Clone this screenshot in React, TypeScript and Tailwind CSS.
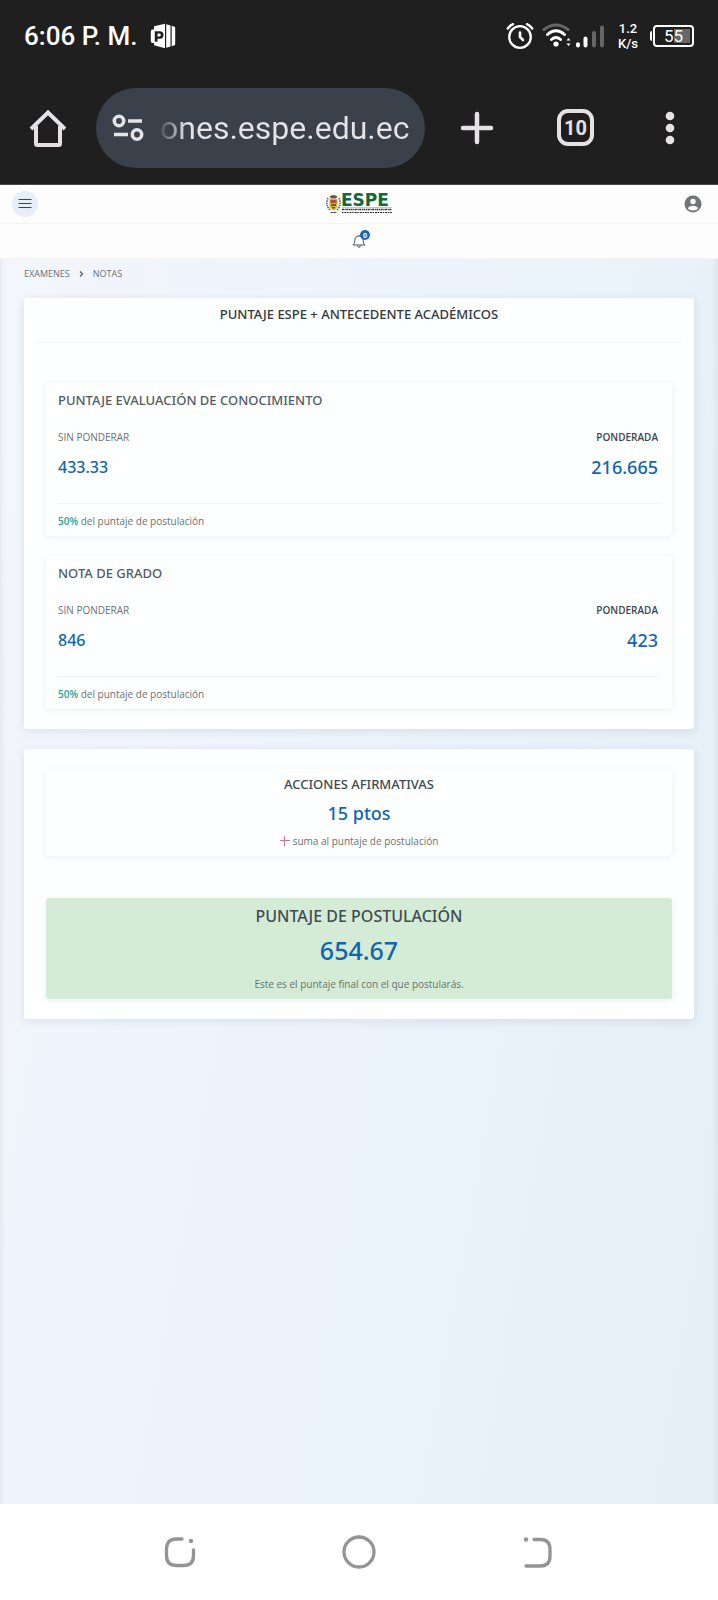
import React from "react";

function StatusBar() {
  return (
    <div className="flex h-[72px] items-center justify-between pl-6 pr-6 text-white">
      <div className="flex items-center gap-[13px]">
        <span className="text-[26px] leading-8 font-medium">6:06 P. M.</span>
        <svg width="26" height="26" viewBox="0 0 26 26" aria-hidden="true">
          <path fillRule="evenodd" fill="#fff" d="M4 3.200 15 .8v24.400L4 22.300V20H2.500Q.8 20 .8 18V8.500Q.8 6.500 2.500 6.500H4ZM4.800 8.200v10.600h2.700v-3h2.300q3.700-.3 3.700-3.900T9.800 8.200Zm2.700 2.300h1.800q1.600.1 1.600 1.500t-1.600 1.500H7.500Z" />
          <path fill="#fff" d="M16.200 1.200 20.500 2.500v21L16.200 24.800ZM21.700 2.800l2.200.6q1.300.4 1.300 1.700v15.800q0 1.300-1.300 1.700l-2.200.6Z" />
        </svg>
      </div>
      <div className="flex items-center">
        <svg width="28" height="28" viewBox="0 0 28 28" fill="none" stroke="#fff" strokeLinecap="round" aria-hidden="true">
          <circle cx="14" cy="15" r="10.800" strokeWidth="2.300" />
          <path d="M14 10.500v4.500l3 3" strokeWidth="2.600" />
          <path d="M1.800 6.500Q4 3.500 7 2.200M26.200 6.500Q24 3.500 21 2.200" strokeWidth="2.500" />
        </svg>
        <svg className="ml-2" width="64" height="28" viewBox="0 0 64 28" fill="none" strokeLinecap="round" aria-hidden="true">
          <path d="M2 7.500Q14-1.500 26 7.500" stroke="#666" strokeWidth="3" />
          <path d="M5.500 12.500q8.500-7.500 17 0M9.500 17.500q4.500-4 9 0" stroke="#fff" strokeWidth="3" />
          <circle cx="14" cy="22" r="2.600" fill="#fff" />
          <path d="m24.500 18.500 2-2.500 2 2.500ZM24.500 21.500l2 2.500 2-2.500Z" fill="#fff" />
          <path d="M36 22.200v1.300M43.500 16.500v7" stroke="#fff" strokeWidth="4" />
          <path d="M52 11v12.500M60 5.500v18" stroke="#666" strokeWidth="4" />
        </svg>
        <div className="ml-[10px] w-6 text-center text-[13px] leading-[15px] font-medium">
          1.2
          <br />
          K/s
        </div>
        <div className="ml-2 flex items-center pl-[2px]">
          <span className="mr-px h-[10px] w-[2px] rounded-l bg-white" />
          <span className="flex h-[22px] w-[41px] items-center justify-center rounded-[4px] border-2 border-white bg-linear-to-r from-transparent from-50% to-[#666] to-50% bg-clip-content p-[2px] text-[17px] leading-none">
            55
          </span>
        </div>
      </div>
    </div>
  );
}

function BrowserBar() {
  return (
    <div className="flex h-[113px] items-center border-b border-[#4a4a4a] pb-px">
      <button aria-label="Inicio" className="flex w-24 shrink-0 justify-center">
        <svg width="40" height="40" viewBox="0 0 40 40" fill="none" stroke="#e6e1e5" strokeWidth="4" strokeLinejoin="round">
          <path d="M3 21 20 4.500 37 21" strokeLinejoin="miter" />
          <path d="M8 18v17.500q0 1.500 1.500 1.500h21q1.500 0 1.500-1.500V18" />
        </svg>
      </button>
      <div className="flex h-20 min-w-0 flex-1 items-center rounded-full bg-[#3b414b] pr-3 pl-4">
        <button aria-label="Información del sitio" className="shrink-0">
          <svg width="32" height="30" viewBox="0 0 32 30" fill="none" stroke="#e3e3e8" strokeWidth="3.600">
            <circle cx="7" cy="8" r="4.700" />
            <path d="M16 8h14M2 21.500h14" />
            <circle cx="25" cy="21.500" r="4.700" />
          </svg>
        </button>
        <button className="ml-4 flex-1 bg-linear-to-r from-[#4b515b] to-[#e3e3e8] to-10% bg-clip-text text-left text-[32px] leading-10 whitespace-nowrap text-transparent">
          ones.espe.edu.ec
        </button>
      </div>
      <button aria-label="Nueva pestaña" className="flex w-[104px] shrink-0 justify-center">
        <svg width="34" height="34" viewBox="0 0 34 34" stroke="#e6e1e5" strokeWidth="4.500" strokeLinecap="round">
          <path d="M3 17h28M17 3v28" />
        </svg>
      </button>
      <button className="mx-7 flex size-[37px] shrink-0 items-center justify-center rounded-[11px] border-4 border-[#e6e1e5] text-[20px] leading-none font-bold text-[#e6e1e5]">
        10
      </button>
      <button aria-label="Menú" className="mr-4 ml-4 flex w-16 shrink-0 justify-center">
        <svg width="10" height="34" viewBox="0 0 10 34" fill="#e6e1e5">
          <circle cx="5" cy="5" r="4.300" />
          <circle cx="5" cy="17" r="4.300" />
          <circle cx="5" cy="29" r="4.300" />
        </svg>
      </button>
    </div>
  );
}

function Logo() {
  return (
    <svg className="overflow-visible" width="68" height="20" viewBox="0 0 68 20" role="img" aria-label="ESPE">
      <path d="M3 4Q0 11 5 16M14 4q3 7-2 12" fill="none" stroke="#5c6b3a" strokeWidth="1.600" strokeDasharray="1.500 .8" />
      <path d="M4.500 2.500Q8.500-.5 12.500 2.500l-1.500 2h-5Z" fill="#6b5637" />
      <path d="M4.500 5h8v6q0 4-4 5.500-4-1.500-4-5.500Z" fill="#d9b23a" />
      <path d="M5.500 6h6v3h-6Z" fill="#c7472f" />
      <path d="M6 10h5v2H6Z" fill="#397c50" />
      <path d="M6.500 13h4l-2 2Z" fill="#a83832" />
      <path d="M5.500 18.500h6" stroke="#555" strokeWidth="1" />
      <text x="16" y="12" fontFamily="DejaVu Sans" fontWeight="bold" fontSize="17" fill="#12683a">ESPE</text>
      <path d="M17 13.500h50" stroke="#d89a9a" strokeWidth=".7" />
      <path d="M17 15.500h50" stroke="#333" strokeWidth="1.300" strokeDasharray="2 .6 1.200 .5" />
      <path d="M17 18.500h50" stroke="#222" strokeWidth="1.100" strokeDasharray="1.500 .9 2 .7" />
    </svg>
  );
}

function SiteHeader() {
  return (
    <header className="bg-[#fdfdfe]">
      <div className="flex h-[39px] items-center justify-between border-b border-[#f1f3f6] px-3">
        <button aria-label="Abrir menú" className="flex size-[26px] items-center justify-center rounded-full bg-[#e6eef7]">
          <svg width="14" height="12" viewBox="0 0 14 12" stroke="#3c4650" strokeWidth="1">
            <path d="M.5 1.500h13M.5 5.500h13M.5 9.500h13" />
          </svg>
        </button>
        <Logo />
        <button aria-label="Cuenta" className="flex w-[26px] justify-center">
          <svg width="18" height="18" viewBox="0 0 18 18">
            <circle cx="9" cy="9" r="8.500" fill="#737477" />
            <circle cx="9" cy="6.500" r="2.700" fill="#fff" />
            <path d="M3.800 13.500Q5 10.700 9 10.700t5.200 2.800Q12.500 15.500 9 15.500t-5.200-2Z" fill="#fff" />
          </svg>
        </button>
      </div>
      <div className="flex h-[35px] items-center justify-center border-b border-[#f1f3f6]">
        <button aria-label="Notificaciones" className="relative">
          <svg width="14" height="14" viewBox="0 0 14 14" fill="none" stroke="#49525b" strokeWidth="1">
            <path d="M1 11q1.800-1 1.800-4.500Q2.800 2 7 2t4.200 4.500Q11.200 10 13 11ZM5.500 11.500q.3 1.800 1.500 1.800t1.500-1.800M7 1v1" />
          </svg>
          <span className="absolute -top-1 left-2 flex size-[10px] items-center justify-center rounded-full bg-[#1368b8] text-[7px] leading-none font-bold text-white">
            0
          </span>
        </button>
      </div>
    </header>
  );
}

type ScoreProps = { title: string; raw: string; weighted: string };

function ScoreCard({ title, raw, weighted }: ScoreProps) {
  return (
    <section className="rounded-[3px] bg-[#fdfefe] px-3 pt-2 pb-[7px] shadow-[0_1px_6px_rgba(60,80,110,0.09)]">
      <h2 className="font-['Noto_Sans',sans-serif] text-[13px] leading-[18px] font-medium text-[#535b65]">{title}</h2>
      <div className="mt-5 flex justify-between pr-[2px] text-[10px] leading-4">
        <span className="text-[#6b7178]">SIN PONDERAR</span>
        <span className="font-semibold text-[#3e4650]">PONDERADA</span>
      </div>
      <div className="mt-[10px] flex items-center justify-between pr-[2px] font-['Noto_Sans',sans-serif] font-medium text-[#1265b0]">
        <span className="text-[16px] leading-6">{raw}</span>
        <span className="text-[18px] leading-6">{weighted}</span>
      </div>
      <p className="mt-6 border-t border-[#eff1f5] pt-[9px] text-[10px] leading-4 text-[#6b7178]">
        <b className="font-semibold text-[#1aa39c]">50%</b> del puntaje de postulación
      </p>
    </section>
  );
}

export default function App() {
  return (
    <div className="flex min-h-screen flex-col bg-white font-['Open_Sans',sans-serif]">
      <div className="bg-[#1f1f1f] font-['Roboto',sans-serif]">
        <StatusBar />
        <BrowserBar />
      </div>
      <SiteHeader />
      <main className="flex-1 bg-[linear-gradient(100deg,#f3f6fa_0%,#eff4fd_30%,#eaf2fa_60%,#e6eef7_100%)] px-6 shadow-[inset_7px_0_6px_-6px_rgba(60,80,110,0.1),inset_-7px_0_6px_-6px_rgba(60,80,110,0.1)]">
        <nav aria-label="Ruta" className="flex items-center pt-[7px] text-[9px] leading-4 text-[#6b7178]">
          <a href="#examenes">EXAMENES</a>
          <svg className="mx-[9px]" width="5" height="6" viewBox="0 0 5 6" fill="none" stroke="#555c64" strokeWidth="1.200" aria-hidden="true">
            <path d="m1 .5 2.500 2.500L1 5.500" />
          </svg>
          <a href="#notas">NOTAS</a>
        </nav>
        <div className="mt-4 rounded-[3px] bg-[#fdfefe] px-3 pb-5 shadow-[0_2px_10px_rgba(60,80,110,0.12)]">
          <h1 className="border-b border-[#f1f3f6] pt-[7px] pb-[19px] text-center font-['Noto_Sans',sans-serif] text-[13px] leading-[18px] font-medium text-[#303841]">
            PUNTAJE ESPE + ANTECEDENTE ACADÉMICOS
          </h1>
          <div className="flex flex-col gap-5 px-[10px] pt-10">
            <ScoreCard title="PUNTAJE EVALUACIÓN DE CONOCIMIENTO" raw="433.33" weighted="216.665" />
            <ScoreCard title="NOTA DE GRADO" raw="846" weighted="423" />
          </div>
        </div>
        <div className="mt-5 flex flex-col gap-[42px] rounded-[3px] bg-[#fdfefe] px-[22px] py-5 text-center shadow-[0_2px_10px_rgba(60,80,110,0.12)]">
          <section className="rounded-[3px] bg-[#fdfefe] pt-[6px] pb-[7px] shadow-[0_1px_6px_rgba(60,80,110,0.09)]">
            <h2 className="font-['Noto_Sans',sans-serif] text-[13px] leading-[18px] font-medium text-[#404850]">ACCIONES AFIRMATIVAS</h2>
            <p className="mt-2 font-['Noto_Sans',sans-serif] text-[18px] leading-6 font-medium text-[#1265b0]">15 ptos</p>
            <p className="mt-2 flex items-center justify-center gap-[3px] text-[10px] leading-4 text-[#6b7178]">
              <svg width="10" height="10" viewBox="0 0 10 10" stroke="#dc6f89" strokeWidth="1" aria-hidden="true">
                <path d="M0 4.500h10M4.500 0v10" />
              </svg>
              suma al puntaje de postulación
            </p>
          </section>
          <section className="rounded-[3px] bg-[#d4ebd6] pt-2 pb-[7px] shadow-[0_1px_6px_rgba(60,80,110,0.09)]">
            <h2 className="font-['Noto_Sans',sans-serif] text-[16px] leading-5 font-medium text-[#3f4d52]">PUNTAJE DE POSTULACIÓN</h2>
            <p className="mt-2 font-['Noto_Sans',sans-serif] text-[25px] leading-8 font-medium text-[#1265b0]">654.67</p>
            <p className="mt-[10px] text-[10px] leading-4 text-[#66756e]">Este es el puntaje final con el que postularás.</p>
          </section>
        </div>
      </main>
      <footer className="flex h-24 items-center justify-center gap-[143px]">
        <button aria-label="Recientes">
          <svg width="36" height="36" viewBox="0 0 36 36" fill="none" stroke="#949494" strokeWidth="3.300" strokeLinecap="round">
            <path d="M20 5h-5.500Q4.500 5 4.500 15v6.500q0 10 10 10h7q10 0 10-10V16" />
            <circle cx="29" cy="7" r="2.200" fill="#949494" stroke="none" />
          </svg>
        </button>
        <button aria-label="Inicio del sistema">
          <svg width="36" height="36" viewBox="0 0 36 36" fill="none" stroke="#949494" strokeWidth="3.300">
            <circle cx="18" cy="18" r="15" />
          </svg>
        </button>
        <button aria-label="Atrás">
          <svg width="36" height="36" viewBox="0 0 36 36" fill="none" stroke="#949494" strokeWidth="3.300" strokeLinecap="round">
            <path d="M14 5.500h6.500q9.500 0 9.500 9.500v7q0 10-9.500 10H6" />
            <circle cx="6" cy="5.500" r="2.200" fill="#949494" stroke="none" />
          </svg>
        </button>
      </footer>
    </div>
  );
}
